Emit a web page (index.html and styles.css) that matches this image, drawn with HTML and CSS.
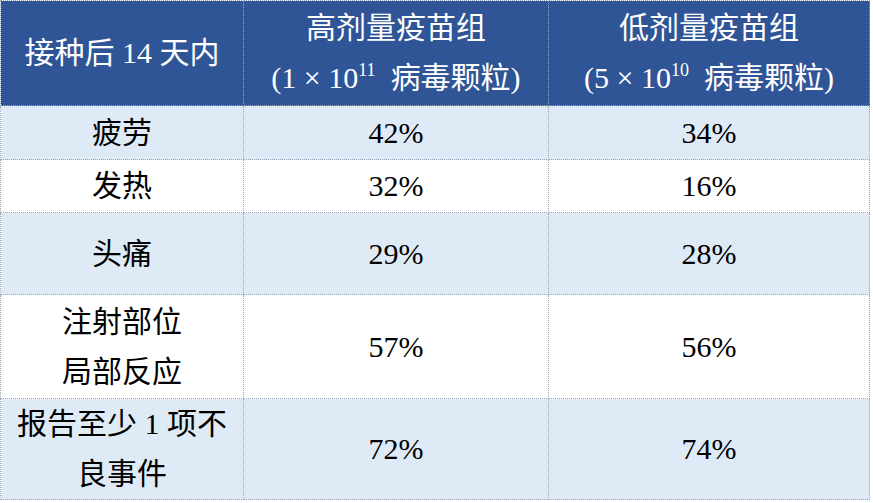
FILE: index.html
```html
<!DOCTYPE html>
<html lang="zh-CN">
<head>
<meta charset="utf-8">
<title>不良反应</title>
<link rel="stylesheet" href="styles.css">
</head>
<body>
<table class="ae-table">
  <colgroup>
    <col class="c1">
    <col class="c2">
    <col class="c3">
  </colgroup>
  <thead>
    <tr class="head">
      <th>接种后 14 天内</th>
      <th>高剂量疫苗组<br>(1 × 10<sup>11</sup>&nbsp; 病毒颗粒)</th>
      <th>低剂量疫苗组<br>(5 × 10<sup>10</sup>&nbsp; 病毒颗粒)</th>
    </tr>
  </thead>
  <tbody>
    <tr class="r1 shade"><td>疲劳</td><td>42%</td><td>34%</td></tr>
    <tr class="r2"><td>发热</td><td>32%</td><td>16%</td></tr>
    <tr class="r3 shade"><td>头痛</td><td>29%</td><td>28%</td></tr>
    <tr class="r4"><td>注射部位<br>局部反应</td><td>57%</td><td>56%</td></tr>
    <tr class="r5 shade"><td>报告至少 1 项不<br>良事件</td><td>72%</td><td>74%</td></tr>
  </tbody>
</table>
</body>
</html>
```
FILE: styles.css
```css
html, body {
  margin: 0;
  padding: 0;
  background: #ffffff;
}
.ae-table {
  border-collapse: collapse;
  table-layout: fixed;
  width: 869px;
  font-family: "Liberation Serif", "Noto Sans CJK SC", serif;
  font-size: 30px;
  line-height: 50px;
  color: #000000;
}
.c1 { width: 243px; }
.c2 { width: 305px; }
.c3 { width: 321px; }
.ae-table th,
.ae-table td {
  border: 1px dotted #9aa6b8;
  padding: 0;
  text-align: center;
  vertical-align: middle;
  font-weight: normal;
}
.head th {
  background: #2f5597;
  color: #ffffff;
  height: 104px;
}
.head sup {
  font-size: 18px;
  line-height: 0;
  vertical-align: 12px;
}
.shade td { background: #deeaf6; }
.r1 td { height: 53px; }
.r2 td { height: 52px; }
.r3 td { height: 81px; }
.r4 td { height: 103px; }
.r5 td { height: 99px; }
```
